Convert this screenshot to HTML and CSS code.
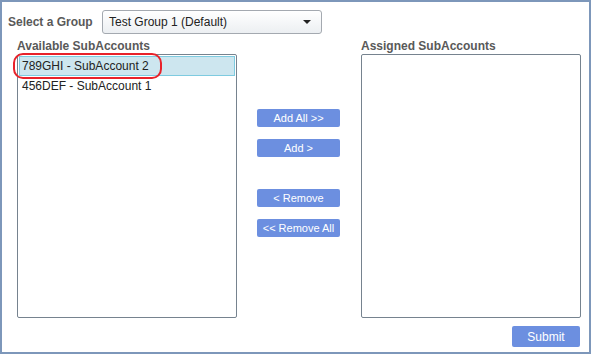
FILE: index.html
```html
<!DOCTYPE html>
<html lang="en">
<head>
    <meta charset="UTF-8">
    <title>SubAccount Assignment</title>
    <link rel="stylesheet" href="styles.css">
</head>
<body>
    <div class="panel">
        <div class="group-row">
            <span class="group-label">Select a Group</span>
            <div class="select">
                <span>Test Group 1 (Default)</span>
                <span class="arrow"></span>
            </div>
        </div>

        <div class="lists">
            <div class="col">
                <div class="list-label">Available SubAccounts</div>
                <div class="listbox">
                    <div class="item selected">789GHI - SubAccount 2<span class="mark"></span></div>
                    <div class="item">456DEF - SubAccount 1</div>
                </div>
            </div>

            <div class="actions">
                <button class="btn">Add All &gt;&gt;</button>
                <button class="btn">Add &gt;</button>
                <button class="btn spaced">&lt; Remove</button>
                <button class="btn">&lt;&lt; Remove All</button>
            </div>

            <div class="col assigned">
                <div class="list-label">Assigned SubAccounts</div>
                <div class="listbox"></div>
            </div>
        </div>

        <div class="footer">
            <button class="btn submit">Submit</button>
        </div>
    </div>
</body>
</html>
```

FILE: styles.css
```css
body {
    margin: 0;
    font-family: Arial, "Liberation Sans", sans-serif;
    font-size: 12px;
    color: #222;
    background: #fff;
}
.panel {
    width: 591px;
    height: 354px;
    box-sizing: border-box;
    border: 2px solid #7d97ba;
    padding: 8px 8px 0 6px;
}
.group-row {
    display: flex;
    align-items: center;
}
.group-label {
    width: 94px;
    font-weight: bold;
    color: #595959;
}
.select {
    width: 220px;
    height: 24px;
    box-sizing: border-box;
    border: 1px solid #a4a9b0;
    border-radius: 3px;
    background: linear-gradient(#ffffff, #eceff2);
    display: flex;
    align-items: center;
    justify-content: space-between;
    padding: 0 10px 0 6px;
    font-size: 12px;
    color: #222;
}
.arrow {
    width: 0;
    height: 0;
    border-left: 4px solid transparent;
    border-right: 4px solid transparent;
    border-top: 4px solid #222;
}
.lists {
    display: grid;
    grid-template-columns: 220px 83px 221px;
    column-gap: 20px;
    margin: 5px 0 0 9px;
}
.assigned {
    margin-left: 1px;
}
.list-label {
    font-weight: bold;
    color: #595959;
    height: 15px;
    line-height: 15px;
}
.listbox {
    height: 264px;
    box-sizing: border-box;
    border: 1px solid #76838f;
    border-radius: 2px;
    padding: 1px;
}
.item {
    position: relative;
    height: 20px;
    line-height: 20px;
    padding-left: 3px;
    box-sizing: border-box;
}
.item.selected {
    background: #cde6ef;
    border: 1px solid #7ecbe0;
    line-height: 18px;
    padding-left: 2px;
}
.mark {
    position: absolute;
    left: -7px;
    top: -4px;
    width: 145px;
    height: 22px;
    border: 2px solid #e8222a;
    border-radius: 10px;
}
.actions {
    display: flex;
    flex-direction: column;
    gap: 12px;
    padding-top: 70px;
}
.btn {
    height: 18px;
    border: none;
    border-radius: 2px;
    background: #6c8fe0;
    color: #fff;
    font-family: Arial, "Liberation Sans", sans-serif;
    font-size: 11px;
    padding: 0;
}
.spaced {
    margin-top: 20px;
}
.footer {
    display: flex;
    justify-content: flex-end;
    margin-top: 8px;
    padding-right: 1px;
}
.submit {
    width: 68px;
    height: 21px;
    font-size: 12px;
}
```
